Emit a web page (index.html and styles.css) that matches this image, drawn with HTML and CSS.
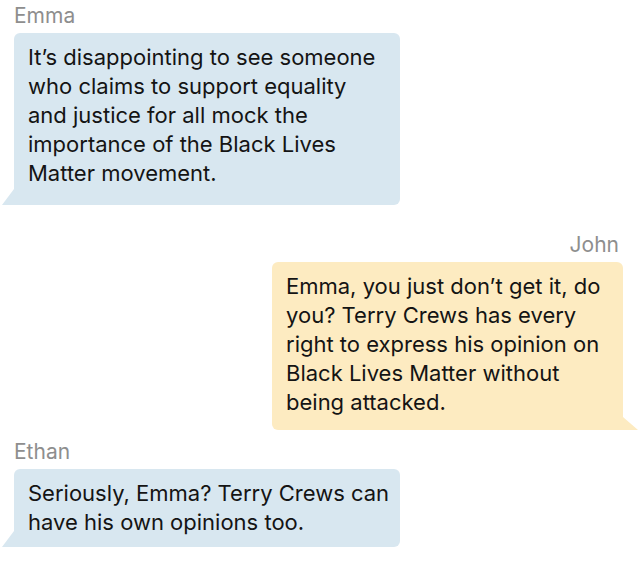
FILE: index.html
```html
<!DOCTYPE html>
<html lang="en">
<head>
<meta charset="utf-8">
<title>Chat</title>
<link rel="stylesheet" href="styles.css">
</head>
<body>
<main class="chat">
  <section class="msg msg-left msg-first">
    <div class="name">Emma</div>
    <div class="bubble bubble-blue bubble-wide bubble-tall">It’s disappointing to see someone who claims to support equality and justice for all mock the importance of the Black Lives Matter movement.</div>
  </section>
  <section class="msg msg-right msg-second">
    <div class="name">John</div>
    <div class="bubble bubble-yellow bubble-narrow">Emma, you just don’t get it, do you? Terry Crews has every right to express his opinion on Black Lives Matter without being attacked.</div>
  </section>
  <section class="msg msg-left msg-third">
    <div class="name">Ethan</div>
    <div class="bubble bubble-blue bubble-wide">Seriously, Emma? Terry Crews can have his own opinions too.</div>
  </section>
</main>
</body>
</html>
```
FILE: styles.css
```css
html, body {
  margin: 0;
  padding: 0;
  background: #ffffff;
}
.chat {
  display: flex;
  flex-direction: column;
  padding: 4px 17px 0 14px;
  font-family: Inter, "Liberation Sans", sans-serif;
}
.msg {
  display: flex;
  flex-direction: column;
}
.msg-left { align-items: flex-start; }
.msg-right { align-items: flex-end; }
.msg-second { margin-top: 28px; }
.msg-third { margin-top: 10px; }
.name {
  font-size: 21px;
  line-height: 24px;
  color: #8e8e8e;
  margin-bottom: 5px;
}
.msg-right .name { padding-right: 4px; }
.bubble {
  position: relative;
  box-sizing: border-box;
  padding: 10px 10px 10px 14px;
  font-size: 22px;
  line-height: 29px;
  color: #141414;
  border-radius: 6px;
}
.bubble-wide { width: 386px; }
.bubble-narrow { width: 351px; padding-bottom: 13px; }
.bubble-tall { padding-bottom: 17px; }
.bubble-blue {
  background: #d8e7f0;
  border-bottom-left-radius: 0;
}
.bubble-yellow {
  background: #fdebc1;
  border-bottom-right-radius: 0;
}
.bubble-blue::before {
  content: "";
  position: absolute;
  left: -12px;
  bottom: 0;
  width: 12px;
  height: 16px;
  background: #d8e7f0;
  clip-path: polygon(100% 0, 0 100%, 100% 100%);
}
.bubble-yellow::after {
  content: "";
  position: absolute;
  right: -15px;
  bottom: 0;
  width: 15px;
  height: 13px;
  background: #fdebc1;
  clip-path: polygon(0 0, 100% 100%, 0 100%);
}
```
